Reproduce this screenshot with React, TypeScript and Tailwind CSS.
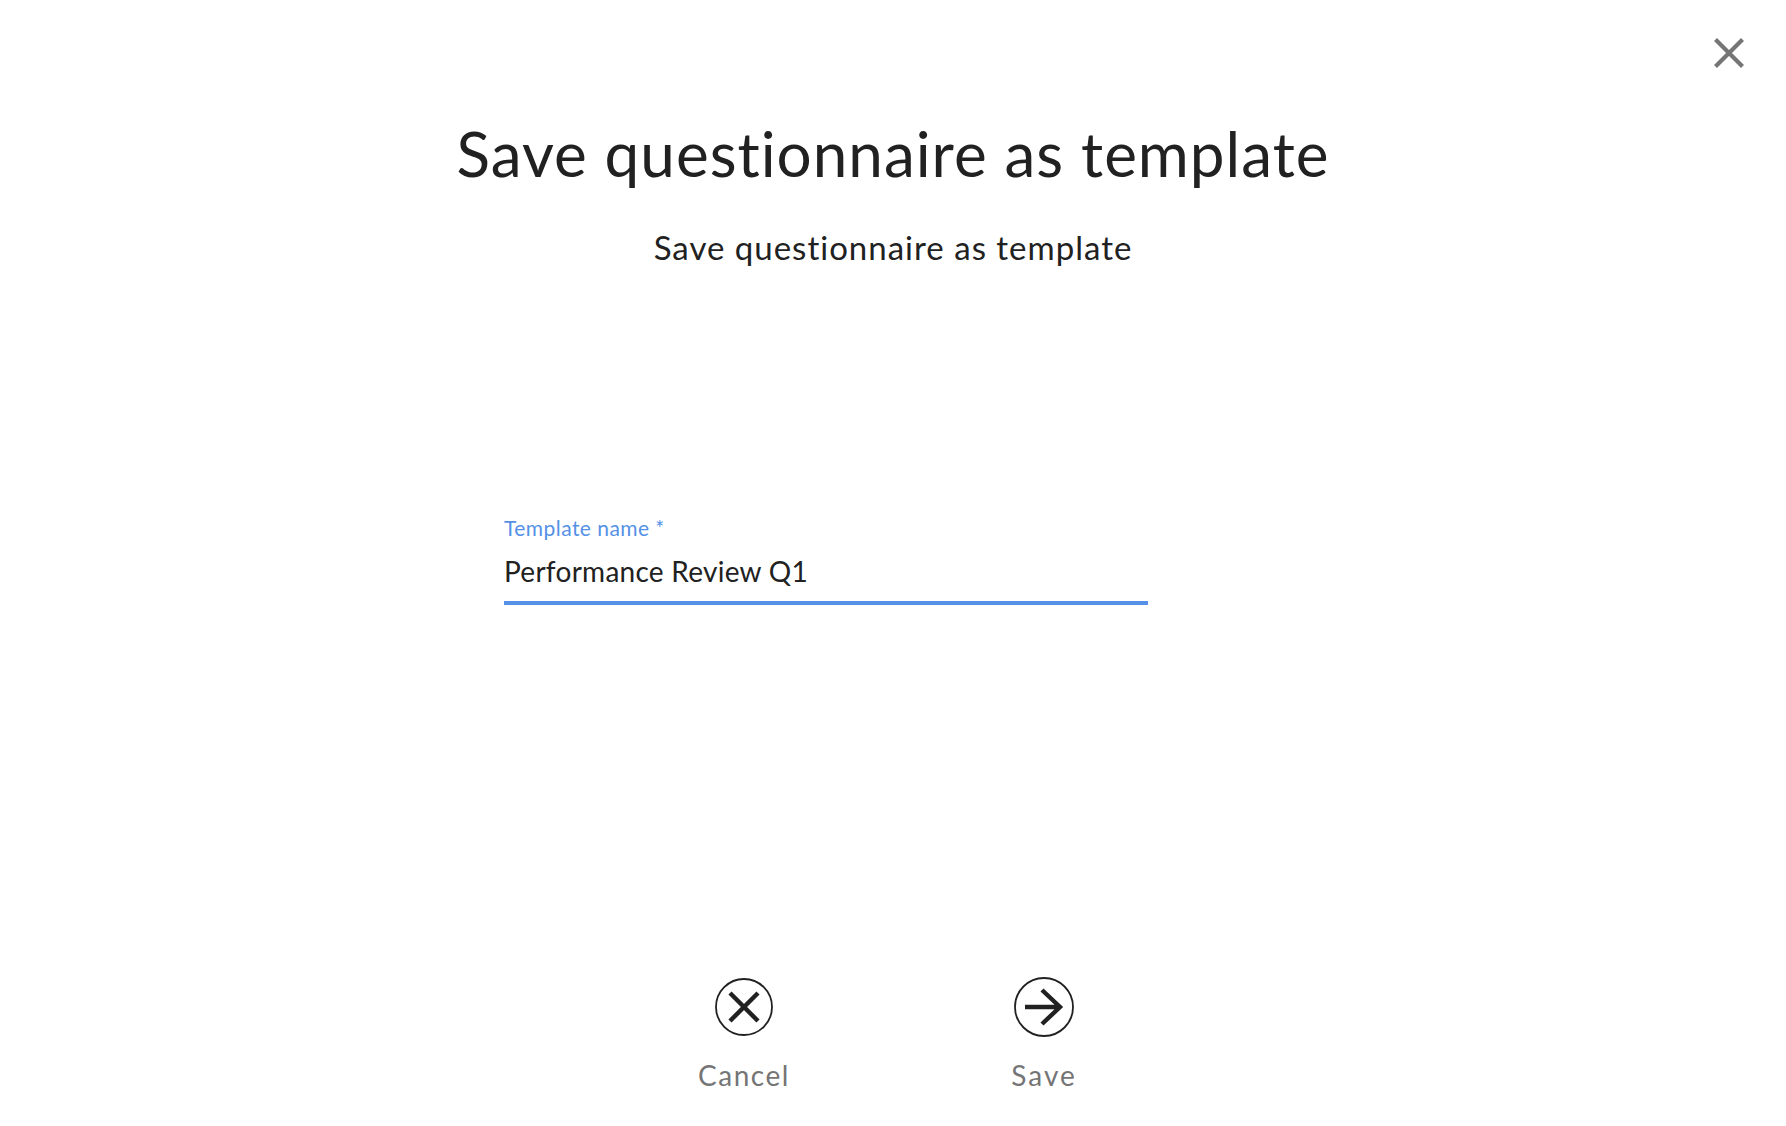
import React from 'react';

const CloseIcon: React.FC = () => (
    <svg width="32" height="32" viewBox="0 0 32 32" fill="none" stroke="#757575" strokeWidth="4.2">
        <path d="M2.5 2.5 L29.5 29.5 M29.5 2.5 L2.5 29.5" />
    </svg>
);

const CancelIcon: React.FC = () => (
    <svg width="58" height="58" viewBox="0 0 58 58" fill="none" stroke="#212121">
        <circle cx="29" cy="29" r="28" strokeWidth="1.8" />
        <path d="M15 15 L43 43 M43 15 L15 43" strokeWidth="4.4" />
    </svg>
);

const SaveIcon: React.FC = () => (
    <svg width="60" height="60" viewBox="0 0 60 60" fill="none" stroke="#212121">
        <circle cx="30" cy="30" r="29" strokeWidth="1.8" />
        <path d="M11 30 L46 30 M28 13 L46 30 L28 47" strokeWidth="4.4" />
    </svg>
);

export default function App() {
    return (
        <div className="relative flex h-[1126px] w-full flex-col items-center bg-white font-['Lato','Noto_Sans',sans-serif] text-[#212121]">
            <button className="absolute right-[41px] top-[37px] flex">
                <CloseIcon />
            </button>

            <h1 className="mt-[113px] text-[62px] font-normal leading-[80px] tracking-[1px]">Save questionnaire as template</h1>
            <p className="mt-[32px] text-[33px] leading-[44px] tracking-[1px]">Save questionnaire as template</p>

            <div className="mt-[245px] flex w-[644px] flex-col self-start ml-[504px]">
                <label className="text-[21px] leading-[28px] tracking-[0.45px] text-[#5591e6]">Template name *</label>
                <div className="mt-[9px] border-b-4 border-[#5591e6] pb-[10px] text-[28px] leading-[40px] tracking-[0.27px]">Performance Review Q1</div>
            </div>

            <div className="mt-[372px] flex items-end gap-[190px] pl-[2px]">
                <button className="flex w-[110px] flex-col items-center gap-[19px] text-[28px] leading-[40px] tracking-[1.5px] text-[#757575]">
                    <CancelIcon />
                    Cancel
                </button>
                <button className="flex w-[110px] flex-col items-center gap-[18px] text-[28px] leading-[40px] tracking-[2px] text-[#757575]">
                    <SaveIcon />
                    Save
                </button>
            </div>
        </div>
    );
}
